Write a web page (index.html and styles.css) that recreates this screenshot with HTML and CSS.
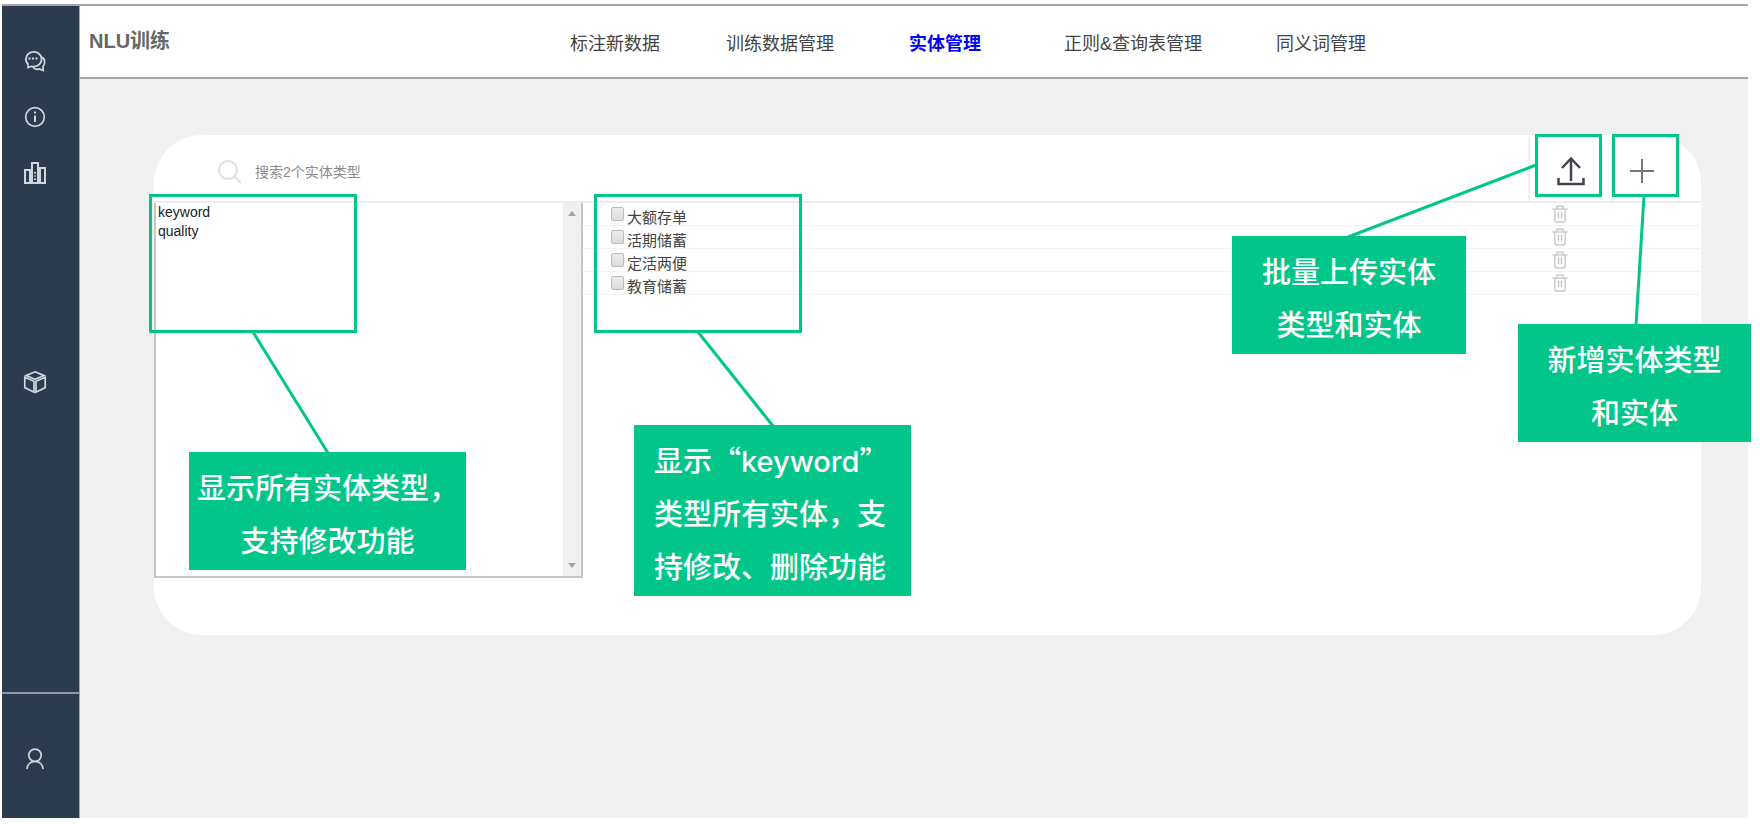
FILE: index.html
```html
<!DOCTYPE html>
<html lang="zh-CN">
<head>
<meta charset="utf-8">
<title>NLU训练</title>
<link rel="stylesheet" href="styles.css">
</head>
<body>
<div class="shell">
  <aside class="sidebar">
    <div class="side-main">
      <button class="side-btn" aria-label="对话"><svg viewBox="0 0 22 22"><path d="M4 17.600V14.200A7.800 7.400 0 1 1 7.500 16.300L4 17.600Z"/><path d="M18.200 7a6.600 6.600 0 0 1 .8 9.500l.2 4-3.800-1.600c-2.500.9-5 .3-6.600-1.600"/><path class="dots" d="M4.500 8.500h2M8 8.500h2M11.500 8.500h2"/></svg></button>
      <button class="side-btn" aria-label="信息"><svg viewBox="0 0 22 22"><circle cx="11" cy="11" r="9.300"/><path class="bold" d="M11 9.500v6.500M11 5.500v2"/></svg></button>
      <button class="side-btn chart" aria-label="统计"><svg viewBox="0 0 22 22"><path d="M1 8h5v13H1zM8 1h6v20H8zM16 6h5v15h-5zM11 10v1.500M11 13.500v1M11 16.500v1.500"/></svg></button>
      <button class="side-btn cube" aria-label="模型"><svg viewBox="0 0 22 22"><path d="M11 .8 20 4.600 11 8.400 2 4.600zM.8 6.300 10 10.200V21.200L.8 16.600zM21.200 6.300 12 10.200V21.200l9.200-4.600z"/></svg></button>
    </div>
    <div class="side-user">
      <button class="side-btn" aria-label="用户"><svg viewBox="0 0 22 22"><circle cx="11" cy="7.300" r="6.200"/><path d="M3 21c.3-4.500 3.300-7.600 8-7.600s7.700 3.100 8 7.600"/></svg></button>
    </div>
  </aside>
  <div class="page">
    <header class="topbar">
      <h1 class="title">NLU训练</h1>
      <nav class="tabs">
        <a href="#label">标注新数据</a>
        <a href="#data">训练数据管理</a>
        <a href="#entity" class="active" aria-current="page">实体管理</a>
        <a href="#regex">正则&amp;查询表管理</a>
        <a href="#synonym">同义词管理</a>
      </nav>
    </header>
    <main class="content">
      <section class="card">
        <div class="toolbar">
          <label class="search">
            <svg class="search-icon" viewBox="0 0 24 24"><circle cx="10" cy="10" r="9"/><path d="m16.500 16.500 6.500 6.500"/></svg>
            <input type="text" placeholder="搜索2个实体类型" aria-label="搜索实体类型">
          </label>
          <button class="tool upload" aria-label="批量上传"><svg viewBox="0 0 28 28"><path d="M14 24V2M5 11l9-9.500 9 9.500M1.500 21v6h25v-6"/></svg></button>
          <button class="tool add" aria-label="新增"><svg viewBox="0 0 24 24"><path d="M12 0v24M0 12h24"/></svg></button>
        </div>
        <div class="body">
          <div class="types">
            <select size="8" aria-label="实体类型">
              <option>keyword</option>
              <option>quality</option>
            </select>
            <div class="scrollbar"><span class="arrow up"></span><span class="arrow down"></span></div>
          </div>
          <ul class="entities">
            <li><label><input type="checkbox"><span>大额存单</span></label><button class="del" aria-label="删除"><svg viewBox="0 0 16 18"><path d="M.5 4h15M5 4V1.200h6V4M2.800 4v11q0 2 2 2h6.400q2 0 2-2V4M6.500 6.500v6.500M9.500 6.500v6.500"/></svg></button></li>
            <li><label><input type="checkbox"><span>活期储蓄</span></label><button class="del" aria-label="删除"><svg viewBox="0 0 16 18"><path d="M.5 4h15M5 4V1.200h6V4M2.800 4v11q0 2 2 2h6.400q2 0 2-2V4M6.500 6.500v6.500M9.500 6.500v6.500"/></svg></button></li>
            <li><label><input type="checkbox"><span>定活两便</span></label><button class="del" aria-label="删除"><svg viewBox="0 0 16 18"><path d="M.5 4h15M5 4V1.200h6V4M2.800 4v11q0 2 2 2h6.400q2 0 2-2V4M6.500 6.500v6.500M9.500 6.500v6.500"/></svg></button></li>
            <li><label><input type="checkbox"><span>教育储蓄</span></label><button class="del" aria-label="删除"><svg viewBox="0 0 16 18"><path d="M.5 4h15M5 4V1.200h6V4M2.800 4v11q0 2 2 2h6.400q2 0 2-2V4M6.500 6.500v6.500M9.500 6.500v6.500"/></svg></button></li>
          </ul>
        </div>

        <!-- annotations over the card -->
        <div class="frame frame-types"></div>
        <svg class="lead lead-types" viewBox="0 0 75 121"><path d="M0 0 75 121"/></svg>
        <p class="note note-types">显示所有实体类型，<br>支持修改功能</p>

        <div class="frame frame-entities"></div>
        <svg class="lead lead-entities" viewBox="0 0 75 94"><path d="M0 0 75 94"/></svg>
        <p class="note note-entities">显示“<span class="latin">keyword</span>”<br>类型所有实体，支<br>持修改、删除功能</p>

        <div class="frame frame-upload"></div>
        <svg class="lead lead-upload" viewBox="0 0 188 72"><path d="M188 0 0 72"/></svg>
        <p class="note note-upload">批量上传实体<br>类型和实体</p>

        <div class="frame frame-add"></div>
        <svg class="lead lead-add" viewBox="0 0 8 129"><path d="M8 0 0 129"/></svg>
        <p class="note note-add">新增实体类型<br>和实体</p>
      </section>
    </main>
  </div>
</div>
</body>
</html>
```

FILE: styles.css
```css
* { box-sizing: border-box; }

body {
  margin: 0;
  padding: 4px 12px 6px 2px;
  background: #fff;
  font-family: "Liberation Sans", "Noto Sans CJK SC", sans-serif;
}

button {
  padding: 0;
  border: 0;
  background: none;
}

svg {
  display: block;
  overflow: visible;
  fill: none;
}

.shell {
  display: flex;
  min-height: calc(100vh - 10px);
  border-top: 2px solid #a6a6a6;
  background: #f1f1f1;
}

/* sidebar */
.sidebar {
  display: flex;
  flex-direction: column;
  width: 78px;
  background: #2c3c4e;
  border-right: 1px solid #a0a4a8;
}

.side-main {
  flex: 1;
  display: flex;
  flex-direction: column;
  align-items: flex-start;
  gap: 34px;
  padding: 44px 0 0 22px;
}

.side-user {
  height: 126px;
  padding: 54px 0 0 22px;
  border-top: 2px solid #8d98a4;
}

.side-btn { width: 22px; height: 22px; }
.side-btn svg {
  width: 22px;
  height: 22px;
  stroke: #d0d6dc;
  stroke-width: 1.7;
}
.side-btn .dots, .side-btn .bold { stroke-width: 2; }
.side-btn.chart svg { stroke-width: 2; }
.cube { margin-top: 153px; }

/* header */
.page { flex: 1; min-width: 0; }

.topbar {
  display: flex;
  align-items: center;
  height: 73px;
  padding: 0 9px 2px;
  background: #fff;
  border-bottom: 2px solid #a6a6a6;
}

.title {
  width: 481px;
  margin: 0;
  font-size: 20px;
  line-height: 28px;
  color: #666;
}

.tabs {
  display: grid;
  grid-template-columns: 156px 183px 155px 212px auto;
  padding-top: 6px;
}

.tabs a {
  font-size: 18px;
  line-height: 24px;
  color: #444;
  text-decoration: none;
  white-space: nowrap;
}

.tabs .active { color: #00f; font-weight: 700; }

/* card */
.content { padding: 56px 47px 0 74px; }

.card {
  position: relative;
  padding-bottom: 57px;
  background: #fff;
  border-radius: 48px;
}

.toolbar {
  display: flex;
  height: 68px;
  border-bottom: 2px solid #eee;
}

.search {
  flex: 1;
  display: flex;
  align-items: center;
  gap: 13px;
  padding: 8px 0 0 64px;
}

.search-icon {
  width: 24px;
  height: 24px;
  stroke: #e0e0e0;
  stroke-width: 2;
}

.search input {
  width: 320px;
  padding: 0;
  border: 0;
  outline: 0;
  background: none;
  font: 14px/20px "Liberation Sans", "Noto Sans CJK SC", sans-serif;
}

.search input::placeholder { color: #8c8c8c; opacity: 1; }

.tool {
  display: flex;
  margin-top: 2px;
  border-left: 2px solid #f0f0f0;
}

.upload { width: 83px; padding: 20px 0 0 27px; }
.upload svg { width: 28px; height: 28px; stroke: #44444f; stroke-width: 2.5; }
.add { width: 90px; padding: 22px 0 0 17px; }
.add svg { width: 24px; height: 24px; stroke: #777; stroke-width: 2; }

.body { display: flex; }

.types {
  display: flex;
  width: 429px;
  height: 375px;
  border: solid #c6c6c6;
  border-width: 0 2px 2px;
}

.types select {
  flex: 1;
  padding: 0;
  border: 0;
  outline: 0;
  overflow: hidden;
  background: #fff;
  color: #222;
  font: 14px "Liberation Sans", sans-serif;
}

.types option { min-height: 19px; padding: 1px 2px 2px; }

.scrollbar {
  display: flex;
  flex-direction: column;
  justify-content: space-between;
  align-items: center;
  width: 18px;
  padding: 8px 0;
  background: #f0f0f0;
}

.arrow { border: solid transparent; border-width: 0 4px; }
.up { border-bottom: 5px solid #a3a3a3; }
.down { border-top: 5px solid #a3a3a3; }

.entities {
  flex: 1;
  margin: 0;
  padding: 0;
  list-style: none;
}

.entities li {
  display: flex;
  justify-content: space-between;
  height: 23px;
  padding: 0 133px 0 28px;
  border-bottom: 1px solid #f3f3f3;
}

.entities label {
  display: flex;
  align-items: flex-start;
  gap: 3px;
  padding-top: 4px;
  font-size: 15px;
  line-height: 22px;
  color: #444;
}

.entities input {
  appearance: none;
  width: 13px;
  height: 14px;
  margin: 0;
  border: 1px solid #bbb;
  border-radius: 2px;
  background: linear-gradient(#ececec, #dcdcdc);
}

.del { width: 16px; padding-top: 2px; align-self: flex-start; }
.del svg { width: 16px; height: 18px; stroke: #cbcbcb; stroke-width: 1.5; }

/* annotations */
.frame, .lead, .note { position: absolute; }

.frame { border: 3px solid #02c689; }
.lead { stroke: #02c689; stroke-width: 3; }

.note {
  margin: 0;
  padding: 8px 0 4px;
  background: #02c689;
  color: #fff;
  font-family: "Noto Sans CJK SC", sans-serif;
  font-size: 29px;
  font-weight: 500;
  line-height: 53px;
  text-align: center;
  white-space: nowrap;
}

.latin { font-family: Inter, "Liberation Sans", sans-serif; line-height: 1; }

.frame-types, .frame-entities { top: 59px; width: 208px; height: 139px; }
.frame-types { left: -5px; }
.frame-entities { left: 440px; }
.lead-types { left: 99px; top: 197px; width: 75px; height: 121px; }
.lead-entities { left: 544px; top: 197px; width: 75px; height: 94px; }
.note-types { left: 35px; top: 317px; width: 277px; }
.note-entities { left: 480px; top: 290px; width: 277px; padding-left: 20px; text-align: left; }

.frame-upload, .frame-add { top: -1px; width: 67px; height: 63px; }
.frame-upload { right: 99px; }
.frame-add { right: 22px; }
.lead-upload { right: 165px; top: 30px; width: 188px; height: 72px; }
.lead-add { right: 57px; top: 61px; width: 8px; height: 129px; }
.note-upload { right: 235px; top: 101px; width: 234px; }
.note-add { right: -50px; top: 189px; width: 233px; }
```
